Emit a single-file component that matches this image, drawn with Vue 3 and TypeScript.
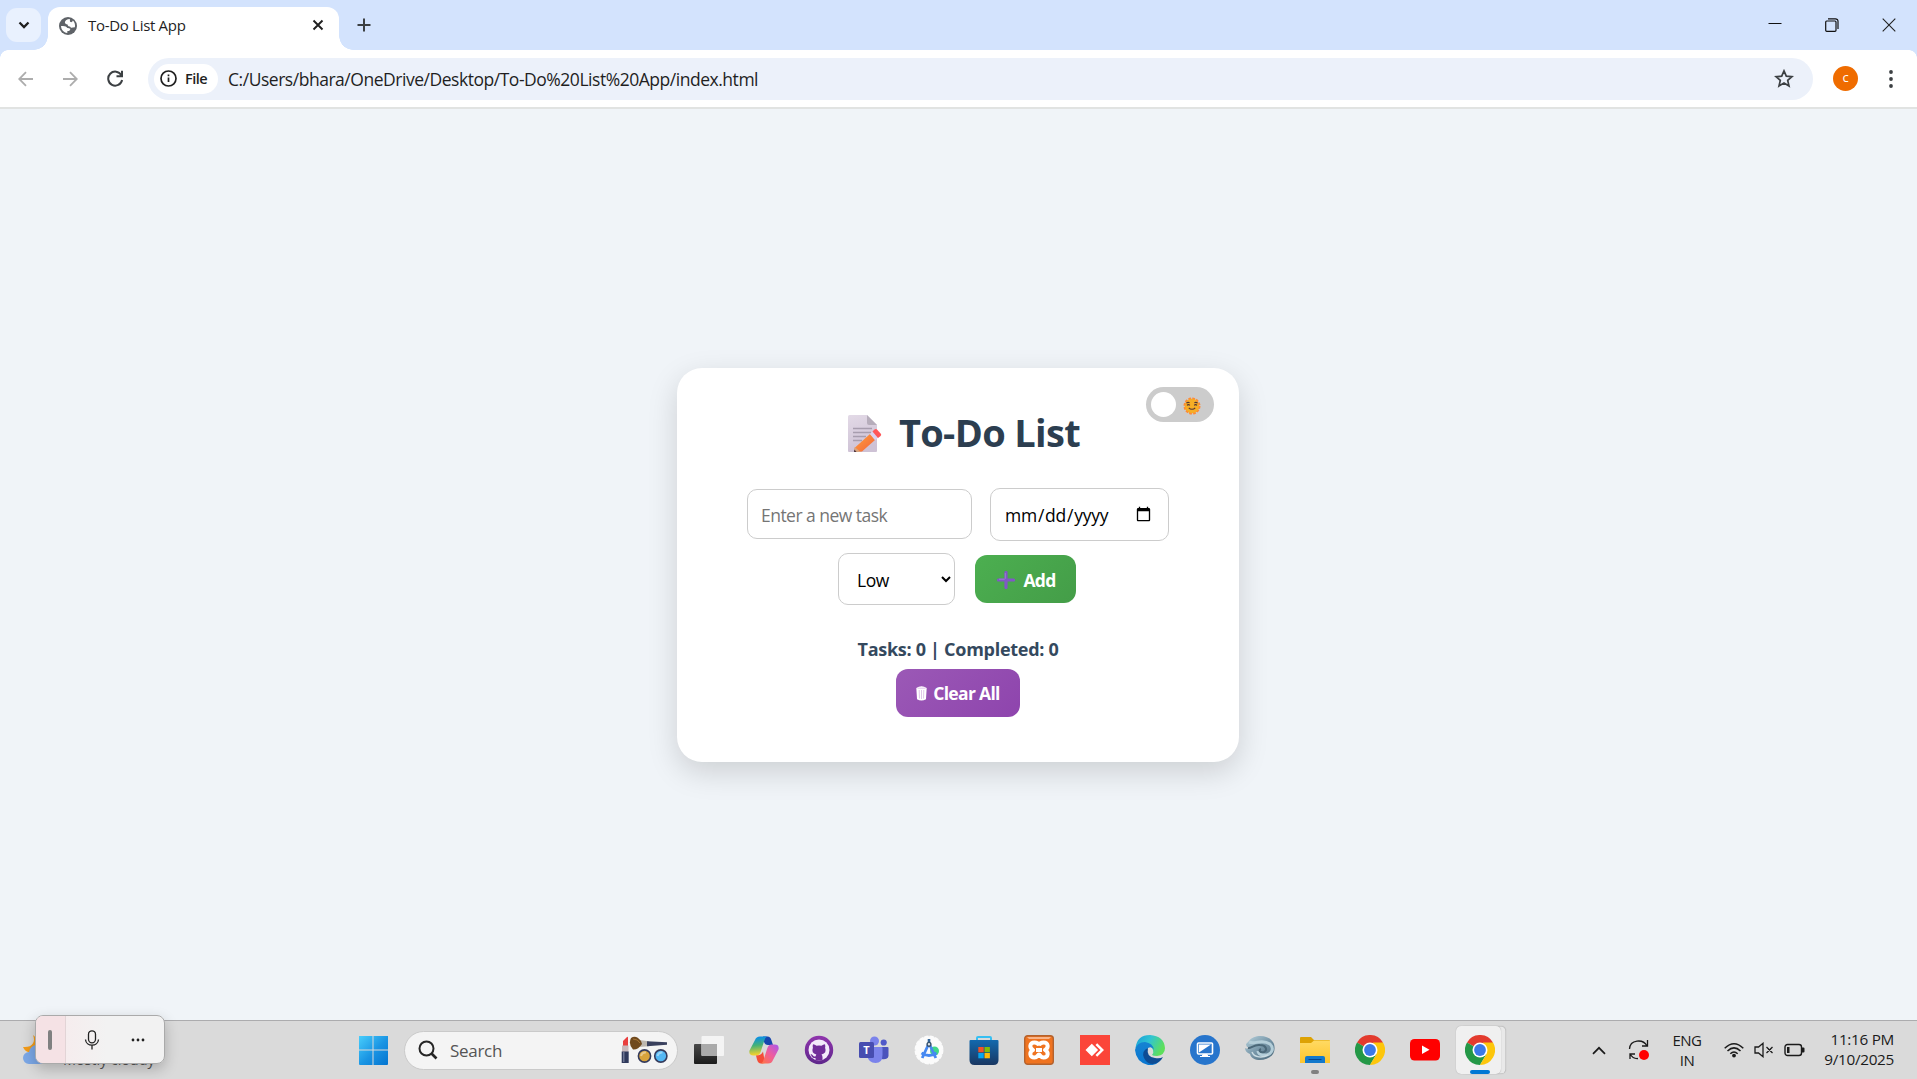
<script setup lang="ts">
import { ref } from 'vue'

const url = 'C:/Users/bhara/OneDrive/Desktop/To-Do%20List%20App/index.html'
const task = ref('')
const due = ref('')
const priority = ref('Low')
const total = ref(0)
const completed = ref(0)
</script>

<template>
  <div class="screen">
    <header class="tabs">
      <button class="tab-search">
        <svg width="12" height="8" viewBox="0 0 12 8"><path d="M1.500 1.500 6 6l4.500-4.500" fill="none" stroke="#1f1f1f" stroke-width="2.300" /></svg>
      </button>
      <div class="tab">
        <svg class="globe" width="18" height="18" viewBox="0 0 18 18">
          <circle cx="9" cy="9" r="9" fill="#5f6368" />
          <path d="M10.800 2c-2.800 0-4.700 1.500-4.900 3.200 0 1.500 1.200 2.100 2.700 2.200.2 1.400.9 2 2.400 2 .4 1 1.300 1.400 2.800 1.200l2.100-.4c.5-2.500-.2-5-2.100-6.600-.4 1.300-1.300 1.800-2.300 1.400-1-.4-.3-1.600-.7-3ZM2 9c.2 3.800 2.700 6.600 6.300 7l.1-1.900c1.900.1 2.900-.8 2.900-2.300-1-.7-2-.6-2.900-.8C7.500 9.200 5.500 8.600 2 9Z" fill="#fff" />
        </svg>
        <span class="tab-title">To-Do List App</span>
        <svg class="tab-close" width="12" height="12" viewBox="0 0 12 12"><path d="m1.500 1.500 9 9m0-9-9 9" stroke="#1f1f1f" stroke-width="1.900" /></svg>
      </div>
      <svg class="plus" width="14" height="14" viewBox="0 0 14 14"><path d="M7 .5v13M.5 7h13" stroke="#3c4043" stroke-width="2" /></svg>
      <div class="window">
        <svg width="14" height="14" viewBox="0 0 14 14"><path d="M.5 5.500h13" stroke="#111" /></svg>
        <svg width="14" height="14" viewBox="0 0 14 14" fill="none" stroke="#111"><rect x=".7" y="3" width="10.300" height="10.300" rx="1" stroke-width="1.200" /><path d="M3 .8h7.500a2.500 2.500 0 0 1 2.500 2.500v7.700" stroke-width="1.200" /></svg>
        <svg width="14" height="14" viewBox="0 0 14 14"><path d="m.7.7 12.600 12.600m0-12.600L.7 13.300" stroke="#222" stroke-width="1.100" /></svg>
      </div>
    </header>

    <nav class="toolbar">
      <svg class="back" width="16" height="16" viewBox="0 0 16 16"><path d="M15 8H1.500M8 1.200 1.200 8 8 14.800" fill="none" stroke="#adadad" stroke-width="1.800" /></svg>
      <svg class="forward" width="16" height="16" viewBox="0 0 16 16"><path d="M1 8h13.500M8 1.200 14.800 8 8 14.800" fill="none" stroke="#adadad" stroke-width="1.800" /></svg>
      <svg class="reload" width="17" height="17" viewBox="0 0 17 17"><path d="M14.300 5.100A7 7 0 1 0 15.100 10M15 .8v5.500H9.500" fill="none" stroke="#3c4043" stroke-width="2" /></svg>
      <div class="omnibox">
        <div class="chip">
          <svg width="17" height="17" viewBox="0 0 17 17"><circle cx="8.500" cy="8.500" r="7.500" fill="none" stroke="#1f1f1f" stroke-width="1.700" /><path d="M8.500 7.500v4.600M8.500 4.400v1.800" stroke="#1f1f1f" stroke-width="1.700" /></svg>
          <span>File</span>
        </div>
        <span class="url">{{ url }}</span>
        <svg class="star" width="20" height="19" viewBox="0 0 20 19"><path d="m10 1.900 2.300 5.300 5.700.5-4.300 3.700 1.300 5.600-5-3-5 3 1.300-5.600L2 7.700l5.700-.5Z" fill="none" stroke="#3c4043" stroke-width="1.700" /></svg>
      </div>
      <span class="avatar">c</span>
      <svg class="menu" width="4" height="18" viewBox="0 0 4 18" fill="#3c4043"><circle cx="2" cy="2" r="1.900" /><circle cx="2" cy="9" r="1.900" /><circle cx="2" cy="16" r="1.900" /></svg>
    </nav>

    <main class="page">
      <section class="card">
        <div class="toggle">
          <i class="knob"></i>
          <svg width="18" height="18" viewBox="0 0 18 18">
            <circle cx="9" cy="9" r="7.300" fill="#f8a51d" stroke="#ff8a35" stroke-width="2.400" stroke-dasharray="2.600 1.230" />
            <circle cx="9" cy="9" r="6.900" fill="#f6ae25" />
            <path d="M3.400 6.100q1.500-1.200 3.200-.3M11.400 5.800q1.700-.9 3.200.3M4 8.400c.8-1 2-1 2.800 0M11.200 8.400c.8-1 2-1 2.800 0M5.800 10.800c1.700 2 4.700 2 6.400 0" fill="none" stroke="#503437" stroke-width="1.100" />
          </svg>
        </div>

        <h1>
          <svg width="34" height="38" viewBox="0 0 34 38">
            <defs>
              <linearGradient id="paper" x2=".3" y2="1"><stop stop-color="#e3dae7" /><stop offset="1" stop-color="#cec2d5" /></linearGradient>
              <linearGradient id="pencil" x2="1" y2="1"><stop stop-color="#ffa13c" /><stop offset="1" stop-color="#f3633a" /></linearGradient>
            </defs>
            <path d="M0 1.500Q0 0 1.500 0H19l10 10v26q0 1-1 1H1q-1 0-1-1Z" fill="url(#paper)" />
            <path d="M19 0v8q0 2 2 2h8Z" fill="#b6adbb" />
            <path d="M5 13.500h19M5 17.500h18M5 21.500h13M5 25.500h9" stroke="#a79dae" stroke-width="1.500" />
            <path d="m22 19 5 6-13 11.500-7 .5-.5-4Z" fill="url(#pencil)" />
            <path d="m6.700 32 6 5H6Z" fill="#d9a47e" /><path d="m6.300 34.500 2.300 2.500H6Z" fill="#4a3440" />
            <path d="m22 19 3-2.500 5.500 6L27 25Z" fill="#dcd2ee" />
            <path d="m24.500 16.500 2-2q1.500-1 2.500 0l4 4.500q.6 1-.4 2L30 23Z" fill="#ff5658" />
          </svg>
          <span>To-Do List</span>
        </h1>

        <div class="row fields">
          <input v-model="task" class="task" type="text" placeholder="Enter a new task" />
          <input v-model="due" class="date" type="date" />
        </div>
        <div class="row controls">
          <select v-model="priority">
            <option>Low</option>
            <option>Medium</option>
            <option>High</option>
          </select>
          <button class="add">
            <svg width="18" height="18" viewBox="0 0 18 18"><path d="M9 1.500v15M1.500 9h15" stroke="#8058c5" stroke-width="3.200" stroke-linecap="round" /><path d="M8.300 2v5.800M2 8.200h5.800" stroke="#9b7bd6" stroke-width="1" /></svg>
            <span>Add</span>
          </button>
        </div>
        <p class="stats">Tasks: {{ total }} | Completed: {{ completed }}</p>
        <button class="clear">
          <svg width="11" height="15" viewBox="0 0 11 15"><path d="M.3 2Q5.500-1.500 10.700 2L10 13.200Q5.500 16 1 13.200Z" fill="#fff" /><path d="M1.500 2.200h8M3.200 4l.3 8.500M5.500 4v9M7.800 4l-.3 8.500" stroke="#d8b7e3" stroke-width=".8" /></svg>
          <span>Clear All</span>
        </button>
      </section>
    </main>

    <footer class="taskbar">
      <div class="weather">
        <svg width="34" height="30" viewBox="0 0 34 30"><path d="M10 0c3 7-1 13-10 12 2 5 7 7 12 4 5-3 5-11-2-16Z" fill="#f39b18" /><path d="M6 29a6 6 0 0 1 0-12 9 9 0 0 1 17-2 7 7 0 0 1 3 14Z" fill="#7ba7e6" /></svg>
        <span>Mostly cloudy</span>
      </div>

      <div class="cell start">
        <svg width="30" height="30" viewBox="0 0 30 30">
          <defs><linearGradient id="win" gradientUnits="userSpaceOnUse" x1="0" y1="0" x2="30" y2="30"><stop stop-color="#4bd1fd" /><stop offset=".55" stop-color="#1a94e3" /><stop offset="1" stop-color="#0374d0" /></linearGradient></defs>
          <path d="M1 1h13.500v13.500H1zM15.500 1H30v13.500H15.500zM1 15.500h13.500V30H2q-1 0-1-1zM15.500 15.500H30V29q0 1-1 1H15.500z" fill="url(#win)" />
        </svg>
      </div>

      <div class="search">
        <svg width="20" height="20" viewBox="0 0 20 20"><circle cx="8.500" cy="8.500" r="7" fill="none" stroke="#252525" stroke-width="2" /><path d="m13.500 13.500 5 5" stroke="#252525" stroke-width="2.600" /></svg>
        <span>Search</span>
        <svg class="makeup" width="47" height="28" viewBox="0 0 47 28">
          <path d="M2 10V5l4-4q1-1 1 1v8Z" fill="#e93e3e" /><path d="M1 9.500h6.500V16H1z" fill="#c8b9bc" /><path d="M.7 15.500h7V27h-7z" fill="#303a5c" /><path d="M2 16h1.500v10H2z" fill="#6c7592" />
          <path d="m18 4 10 1.200v5L18 11Z" fill="#bdb7ae" /><path d="m26 5.200 20 1v2.500l-20 1.500Z" fill="#39405d" />
          <path d="M10 2q5-3.500 10 3l1 3q-4 6-9 5.500Q7 8 10 2Z" fill="#70491d" /><path d="M12 3q5 0 7 4" stroke="#a67635" fill="none" />
          <circle cx="23.500" cy="20" r="6.100" fill="#d9a33b" stroke="#353b5c" stroke-width="1.600" /><circle cx="39.800" cy="20" r="6.100" fill="#53b7f3" stroke="#353b5c" stroke-width="1.600" />
          <path d="M20 20q1-4 5-3.500M36.500 20q1-4 5-3.500" stroke="#fff" stroke-opacity=".4" stroke-width="2" fill="none" />
        </svg>
      </div>

      <div class="apps">
        <div class="cell">
          <svg width="30" height="30" viewBox="0 0 30 30"><defs><linearGradient id="tv" x2="0" y2="1"><stop stop-color="#484848" /><stop offset="1" stop-color="#1b1b1b" /></linearGradient></defs><rect y="9" width="23" height="20" rx="1" fill="url(#tv)" /><rect x="7.500" y="1" width="22.500" height="20" rx="1" fill="#f4f4f4" /><path d="M7.500 9H23v12H8.500q-1 0-1-1Z" fill="#aaa" /></svg>
        </div>
        <div class="cell">
          <svg width="30" height="30" viewBox="0 0 30 30">
            <defs>
              <linearGradient id="cp1" x2=".1" y2="1"><stop offset=".1" stop-color="#0d91e1" /><stop offset=".5" stop-color="#45b276" /><stop offset="1" stop-color="#f6d12b" /></linearGradient>
              <linearGradient id="cp2" x1="1" x2=".1" y2="1"><stop stop-color="#a856ed" /><stop offset=".5" stop-color="#ed5ca0" /><stop offset="1" stop-color="#ff744a" /></linearGradient>
            </defs>
            <path d="M14 1.500h4.500q3 0 4 4l1.500 4.500h-5q-3 0-4-3Z" fill="#1646ae" />
            <path d="M6 5q1.200-3.500 5-3.500h7q-2 1-3 5l-3.200 10q-1.300 4-4.300 4H4.500Q-.5 20.500.5 15.500Z" fill="url(#cp1)" />
            <path d="M16 28q-1.500.5-4 .5-3 0-4-4l-1-4q5.500 0 7-4Z" fill="#f44d37" />
            <path d="M24 25q-1.200 3.500-5 3.500h-7q2-1 3-5l3.200-10q1.300-4 4.300-4h3q5 0 4 5Z" fill="url(#cp2)" />
          </svg>
        </div>
        <div class="cell">
          <svg width="30" height="30" viewBox="0 0 30 30"><defs><linearGradient id="gh" x2="0" y2="1"><stop stop-color="#9035ad" /><stop offset="1" stop-color="#5e278b" /></linearGradient></defs><circle cx="15" cy="15" r="14.200" fill="url(#gh)" /><circle cx="15" cy="15" r="10.500" fill="#f3eafa" /><path d="M9 9.300q2 .1 3.500 1.500 2.500-.6 5 0Q19 9.400 21 9.300q.6 2 .1 3.500 2 5.500-3.600 6.600 1 1 1 3v2.500q-3.500 1-7 0v-2c-2 .4-3.300-.4-4-2-.4-.8-1-1.300-1-1.600.9-.4 1.800.3 2.300 1 .7 1.200 1.700 1.500 2.800 1l.7-1.900Q6.900 18.300 8.900 12.800q-.5-1.700.1-3.500Z" fill="#712d99" /></svg>
        </div>
        <div class="cell">
          <svg width="30" height="30" viewBox="0 0 30 30"><circle cx="15.500" cy="6" r="4.500" fill="#7b83eb" /><circle cx="24.700" cy="7.500" r="3.100" fill="#5059c9" /><path d="M22 12h6.500q1 0 1 1v8q-1 4-7 3Z" fill="#4b53bc" /><path d="M9 12h13.500q1 0 1 1v7q0 8-7 8T8 20Z" fill="#7b83eb" /><rect y="7" width="15" height="16" rx="1.500" fill="#474db0" /><text x="7.500" y="18.700" text-anchor="middle" font-size="11" font-weight="700" fill="#fff">T</text></svg>
        </div>
        <div class="cell">
          <svg width="30" height="30" viewBox="0 0 30 30"><circle cx="15" cy="15" r="13.700" fill="#fbfbfb" stroke="#fbfbfb" stroke-width="1.500" stroke-dasharray="4.200 1.200" /><circle cx="20.500" cy="16" r="4.500" fill="#40d889" /><path d="m14.200 10-6 13M15.800 10l6 13M7.500 18q7.500 5 15 0" fill="none" stroke="#4688f1" stroke-width="2.800" /><path d="M15 4v5" stroke="#356799" stroke-width="2.600" /><circle cx="15" cy="9.300" r="1.900" fill="#dce4ea" stroke="#36516c" stroke-width="1.400" /></svg>
        </div>
        <div class="cell">
          <svg width="30" height="30" viewBox="0 0 30 30"><defs><linearGradient id="store" x2="0" y2="1"><stop stop-color="#1369ae" /><stop offset="1" stop-color="#193762" /></linearGradient></defs><path d="M8 6V3q0-1 1-1h12q1 0 1 1v3" fill="none" stroke="#36bff2" stroke-width="2" /><path d="M.5 6q0-1 1-1h27q1 0 1 1v19q0 5-5 5h-19q-5 0-5-5Z" fill="url(#store)" /><path d="M9.300 12h5.400v5.300H9.300z" fill="#f35325" /><path d="M15.500 12h5.400v5.300h-5.400z" fill="#81bc06" /><path d="M9.300 18h5.400v5.300H9.300z" fill="#05a6f0" /><path d="M15.500 18h5.400v5.300h-5.400z" fill="#ffba08" /></svg>
        </div>
        <div class="cell">
          <svg width="30" height="30" viewBox="0 0 30 30"><rect x=".7" y=".7" width="28.600" height="28.600" rx="3" fill="#ef7320" stroke="#b4622d" stroke-width="1.400" /><path d="M3 2h24l-2 2H5Z" fill="#f9b58a" /><path d="M12 15h6M15 10.500c-.8-2.500-2.500-3-4.500-3-5 0-5.500 5.500-1.500 7.500-4 2-3.500 7.500 1.500 7.500 3.500 0 3-3 4.500-3s1 3 4.500 3c5 0 5.500-5.500 1.500-7.500 4-2 3.500-7.500-1.500-7.500-2 0-3.700.5-4.500 3" fill="none" stroke="#fff" stroke-width="4" stroke-linejoin="round" /></svg>
        </div>
        <div class="cell">
          <svg width="30" height="30" viewBox="0 0 30 30"><path d="M0 0h30v30H0z" fill="#fb4539" /><path d="m5.500 15 6.300-6.300 6.300 6.300-6.300 6.300ZM15.500 10l1.700-1.800L24 15l-6.800 6.800-1.700-1.800 5-5Z" fill="#fff" /></svg>
        </div>
        <div class="cell">
          <svg width="30" height="30" viewBox="0 0 30 30">
            <defs><linearGradient id="edge1" x2="1" y2=".4"><stop stop-color="#179dda" /><stop offset=".5" stop-color="#31c4d2" /><stop offset="1" stop-color="#5ddf5c" /></linearGradient><linearGradient id="edge2" x2="0" y2="1"><stop stop-color="#1683d2" /><stop offset="1" stop-color="#0a76d0" /></linearGradient></defs>
            <path d="M.5 13Q2 0 15 0q14 1 15 13 0 7-8 8-4 0-5-1 2-2 1-5-2-5-8-6-6 0-9.500 4Z" fill="url(#edge1)" />
            <path d="M0 15q2-8 10-8 8 1 9 8-2-4-6-2-4 3-1 9 4 8 13 4-5 5-12 4Q1 27 0 15Z" fill="url(#edge2)" />
            <path d="M13 13q-7 3-4 10 3 6 9 6 7-1 10-7-3 2-8 1-9-1-7-10Z" fill="#0e4c94" />
          </svg>
        </div>
        <div class="cell">
          <svg width="30" height="30" viewBox="0 0 30 30"><circle cx="15" cy="15" r="15" fill="#2775cc" /><rect x="7.500" y="8" width="15" height="11" rx="1" fill="#2775cc" stroke="#fff" stroke-width="1.600" /><path d="M9 9.500h12L9 17.500Z" fill="#fff" /><path d="M13 19.500h4l1 2h-6ZM10 21.500h10" stroke="#fff" stroke-width="1" fill="#fff" /></svg>
        </div>
        <div class="cell">
          <svg width="30" height="30" viewBox="0 0 30 30"><defs><linearGradient id="swirl" x2="1" y2="1"><stop stop-color="#b7d2dd" /><stop offset=".5" stop-color="#7897a9" /><stop offset="1" stop-color="#486475" /></linearGradient></defs><path d="M4 6C9-1 25-1 29 9c3 11-6 16-14 16-5 0-9-2-10-6-3-1-5-3-5-6 2 1 3 1 4 0-2-1-3-2-3-4Z" fill="url(#swirl)" /><path d="M4 7c7 3 12-4 21 2 5 5 1 11-5 11-5 0-7-2-7-4" fill="none" stroke="#b4ced9" stroke-width="3" /><path d="M3 13c3 1 6-4 12-3 6 0 8 5 4 7-4 1-6-2-3-3" fill="none" stroke="#4b6879" stroke-width="2" /><path d="M7 17c2 6 11 6 16 3" fill="none" stroke="#cbdce3" stroke-width="1.500" /></svg>
        </div>
        <div class="cell">
          <svg width="30" height="30" viewBox="0 0 30 30"><defs><linearGradient id="folder" x2="0" y2="1"><stop stop-color="#ffda63" /><stop offset="1" stop-color="#ffc52c" /></linearGradient></defs><path d="M0 3q0-1 1-1h10l3 3h15q1 0 1 1v5H0Z" fill="#dda204" /><path d="M0 8h11l3-2.500h16V28H0Z" fill="url(#folder)" /><path d="M5 28v-5q0-2 2-2h16q2 0 2 2v5Z" fill="#1479cc" /><path d="M8.500 24.500h13" stroke="#07468e" /></svg>
          <i class="dot"></i>
        </div>
        <div class="cell">
          <svg width="30" height="30" viewBox="0 0 30 30"><path d="M2 7.500A15 15 0 0 1 28 7.500L15 15Z" fill="#e33b2e" /><path d="M2 7.500A15 15 0 0 0 15 30l6.500-11L15 15Z" fill="#249847" /><path d="M28 7.500A15 15 0 0 1 15 30l6.500-11L18 7.500Z" fill="#fdc60b" /><circle cx="15" cy="15" r="7.500" fill="#fff" /><circle cx="15" cy="15" r="5.900" fill="#3b79e8" /></svg>
        </div>
        <div class="cell">
          <svg width="30" height="30" viewBox="0 0 30 30"><rect y="4" width="30" height="21.500" rx="4.500" fill="#f00" /><path d="m12 10.500 7.500 4.300-7.500 4.300Z" fill="#fff" /></svg>
        </div>
        <div class="cell active">
          <svg width="30" height="30" viewBox="0 0 30 30"><path d="M2 7.500A15 15 0 0 1 28 7.500L15 15Z" fill="#e33b2e" /><path d="M2 7.500A15 15 0 0 0 15 30l6.500-11L15 15Z" fill="#249847" /><path d="M28 7.500A15 15 0 0 1 15 30l6.500-11L18 7.500Z" fill="#fdc60b" /><circle cx="15" cy="15" r="7.500" fill="#fff" /><circle cx="15" cy="15" r="5.900" fill="#3b79e8" /></svg>
          <i class="dot"></i>
        </div>
      </div>

      <div class="tray">
        <svg class="up" width="14" height="9" viewBox="0 0 14 9"><path d="m1 7.800 6-6 6 6" fill="none" stroke="#1b1b1b" stroke-width="1.700" /></svg>
        <svg class="sync" width="22" height="22" viewBox="0 0 22 22"><path d="M1.500 10C2 .5 15-.5 19 7M19.500 1v6H14M2 20v-5h5M2 15q3 5 8 4.500" fill="none" stroke="#1b1b1b" stroke-width="1.300" /><circle cx="16" cy="16" r="5" fill="#f00" /></svg>
        <div class="lang"><span>ENG</span><span>IN</span></div>
        <svg class="wifi" width="20" height="16" viewBox="0 0 20 16"><path d="M.7 6.200q9.300-9 18.600 0M3.500 9q6.500-6.300 13 0M6.300 11.700q3.700-3.500 7.400 0" fill="none" stroke="#1b1b1b" stroke-width="1.500" /><circle cx="10" cy="13.600" r="1.900" fill="#1b1b1b" /></svg>
        <svg class="sound" width="20" height="16" viewBox="0 0 20 16"><path d="M1 5h3.500L9 1.300v13.400L4.500 11H1ZM12.500 5l6 6m0-6-6 6" fill="none" stroke="#1b1b1b" stroke-width="1.300" /></svg>
        <svg class="battery" width="21" height="14" viewBox="0 0 21 14"><rect x="1" y="1.500" width="16.500" height="11" rx="2.500" fill="none" stroke="#1b1b1b" stroke-width="1.400" /><path d="M3 4h2.500v6H3zM18 4.500h1.500q1 0 1 1v3q0 1-1 1H18z" fill="#1b1b1b" /></svg>
        <div class="clock"><span>11:16 PM</span><span>9/10/2025</span></div>
      </div>
    </footer>

    <aside class="voice">
      <div class="grip"><i></i></div>
      <svg class="mic" width="16" height="20" viewBox="0 0 16 20"><rect x="4.500" y=".8" width="7" height="12" rx="3.500" fill="none" stroke="#222" stroke-width="1.300" /><path d="M1.500 9.500c.5 7.500 12.500 7.500 13 0M8 15.500v4" fill="none" stroke="#222" stroke-width="1.300" /></svg>
      <svg width="14" height="4" viewBox="0 0 14 4" fill="#222"><circle cx="2" cy="2" r="1.400" /><circle cx="7" cy="2" r="1.400" /><circle cx="12" cy="2" r="1.400" /></svg>
    </aside>
  </div>
</template>

<style>
body { overflow: hidden; }
</style>

<style scoped>
* { box-sizing: border-box; }
svg { display: block; flex: none; }
button { border: 0; padding: 0; font: inherit; }
.screen {
  position: relative;
  width: 1917px;
  height: 1079px;
  display: flex;
  flex-direction: column;
  overflow: hidden;
  font-family: "Open Sans", "Noto Sans", sans-serif;
  background: #f0f4f8;
}
.tabs {
  height: 50px;
  background: #d3e3fd;
  display: flex;
  align-items: flex-start;
  padding: 8px 21px 0 6px;
}
.tab-search {
  width: 35px;
  height: 34px;
  border-radius: 11px;
  background: #e9f1fe;
  display: grid;
  place-items: center;
}
.tab {
  position: relative;
  width: 291px;
  height: 43px;
  margin: -1px 0 0 7px;
  padding: 0 15px 6px 11px;
  border-radius: 12px 12px 0 0;
  background: #fff;
  display: flex;
  align-items: center;
}
.tab::before,
.tab::after {
  content: "";
  position: absolute;
  bottom: 0;
  width: 14px;
  height: 14px;
}
.tab::before { left: -14px; background: radial-gradient(circle at 0 0, transparent 13.500px, #fff 14px); }
.tab::after { right: -14px; background: radial-gradient(circle at 100% 0, transparent 13.500px, #fff 14px); }
.tab-title { margin: -1px 0 0 11px; font-size: 15px; letter-spacing: -.3px; color: #1f1f1f; }
.tab-close { margin: -1px 0 0 auto; }
.plus { margin: 10px 0 0 18px; }
.window { margin: 10px 0 0 auto; display: flex; gap: 43px; }
.toolbar {
  position: relative;
  height: 59px;
  background: #fff;
  border-bottom: 2px solid #e1e3e2;
  display: flex;
  align-items: center;
  padding: 0 24px 0 18px;
}
.toolbar::before,
.toolbar::after {
  content: "";
  position: absolute;
  top: 0;
  width: 8px;
  height: 8px;
}
.toolbar::before { left: 0; background: radial-gradient(circle at 100% 100%, transparent 7.500px, #d3e3fd 8px); }
.toolbar::after { right: 0; background: radial-gradient(circle at 0 100%, transparent 7.500px, #d3e3fd 8px); }
.forward { margin-left: 28px; }
.reload { margin-left: 29px; }
.omnibox {
  width: 1665px;
  height: 42px;
  margin-left: 24px;
  padding: 0 19px 0 6px;
  border-radius: 21px;
  background: #ecf1fa;
  display: flex;
  align-items: center;
}
.chip {
  width: 64px;
  height: 30px;
  padding-left: 6px;
  border-radius: 15px;
  background: #fff;
  display: flex;
  align-items: center;
  gap: 8px;
  font-size: 14.500px;
  font-weight: 600;
  letter-spacing: -.5px;
  color: #1f1f1f;
}
.url { margin: 1px 0 0 10px; font-size: 17.500px; letter-spacing: -.47px; color: #1f1f1f; white-space: nowrap; }
.star { margin-left: auto; }
.avatar {
  width: 25px;
  height: 25px;
  margin-left: 20px;
  border-radius: 50%;
  background: #ef6c00;
  color: #fff;
  font-size: 13px;
  line-height: 23px;
  text-align: center;
}
.menu { margin-left: auto; }

.page { flex: 1; display: flex; flex-direction: column; align-items: center; padding-top: 259px; }
.card {
  position: relative;
  width: 562px;
  height: 394px;
  margin-right: 1px;
  padding-top: 45px;
  border-radius: 25px;
  background: #fff;
  box-shadow: 0 10px 30px rgba(0, 0, 0, .15);
  display: flex;
  flex-direction: column;
  align-items: center;
}
.toggle {
  position: absolute;
  top: 19px;
  right: 25px;
  width: 68px;
  height: 35px;
  padding: 0 13px 0 5px;
  border-radius: 18px;
  background: #ccc;
  display: flex;
  align-items: center;
  justify-content: space-between;
}
.toggle svg { margin-top: 2px; }
.knob { width: 25px; height: 25px; border-radius: 50%; background: #fff; }
h1 {
  height: 40px;
  margin: 0;
  padding-left: 12px;
  display: flex;
  align-items: center;
  gap: 17px;
  font-size: 38px;
  line-height: 38px;
  font-weight: 700;
  letter-spacing: -.65px;
  color: #2c3e50;
}
h1 svg { margin-top: 1px; }
h1 span { margin-top: -2px; }
.row { display: flex; align-items: center; justify-content: center; gap: 20px; }
.fields { margin-top: 35px; gap: 18px; }
.controls { margin: 12px 2px 0 0; }
input,
select {
  margin: 0;
  border: 1px solid #ccc;
  border-radius: 10px;
  background: #fff;
  color: #000;
  font: 17.500px "Open Sans", "Noto Sans", sans-serif;
}
.task { width: 225px; height: 50px; margin-bottom: 1px; padding: 2px 13px 0; letter-spacing: -.53px; }
.date { width: 179px; height: 53px; padding: 1px 14px 0 13px; letter-spacing: -.25px; }
select { width: 117px; height: 52px; padding: 2px 5px 0 14px; letter-spacing: -.5px; }
.add,
.clear {
  height: 48px;
  border-radius: 12px;
  color: #fff;
  font-size: 17.500px;
  font-weight: 700;
  letter-spacing: -.68px;
  display: flex;
  align-items: center;
  justify-content: center;
}
.add { width: 101px; gap: 8px; padding: 2px 0 0 2px; background: linear-gradient(135deg, #4caf50, #449d48); }
.clear { width: 124px; gap: 6px; background: linear-gradient(135deg, #9b59b6, #8e44ad); }
.stats {
  margin: 31px 0 7px;
  height: 26px;
  line-height: 26px;
  font-size: 18px;
  font-weight: 700;
  letter-spacing: -.28px;
  color: #34495e;
}

.taskbar {
  height: 59px;
  border-top: 1px solid #acacae;
  background: #dadada;
  display: flex;
  align-items: center;
}
.weather { width: 345px; height: 58px; padding-left: 23px; display: flex; align-items: center; }
.weather span { margin: 18px 0 0 6px; font-size: 14.500px; letter-spacing: -.1px; color: #555; }
.cell { position: relative; width: 55.070px; height: 48px; display: grid; place-items: center; }
.search {
  width: 273.500px;
  height: 39px;
  margin: 0 4px;
  padding: 0 9px 0 13px;
  border-radius: 20px;
  border: 1px solid #cacaca;
  background: #f4f4f4;
  display: flex;
  align-items: center;
  color: #555;
  font-size: 17px;
  letter-spacing: -.3px;
}
.search span { margin-left: 12px; }
.makeup { margin-left: auto; }
.apps { display: flex; }
.dot {
  position: absolute;
  bottom: 0;
  left: 50%;
  width: 8px;
  height: 4px;
  margin-left: -4px;
  border-radius: 2px;
  background: #808080;
}
.active::before {
  content: "";
  position: absolute;
  inset: 0 7px 0 4px;
  border-radius: 5px;
  background: #f0f0f0;
  box-shadow: 0 0 1px #999, 5px 0 0 -.5px #e9e9e9, 5px 0 1px #aaa;
}
.active svg { position: relative; }
.active .dot { width: 20px; margin-left: -10px; background: #0078d4; }
.tray { margin-left: auto; display: flex; align-items: center; padding-right: 23px; color: #1b1b1b; font-size: 15px; line-height: 20px; }
.tray span { display: block; letter-spacing: -.5px; }
.sync { margin-left: 22px; }
.lang { width: 32px; margin-left: 21px; text-align: center; }
.wifi { margin-left: 21px; }
.sound { margin-left: 10px; }
.battery { margin-left: 10px; }
.clock { width: 72px; margin: -2px 0 0 17px; text-align: right; white-space: nowrap; }
.tray .clock span { font-size: 15.300px; letter-spacing: -.3px; }

.voice {
  position: absolute;
  left: 35px;
  top: 1015px;
  width: 130px;
  height: 49px;
  border: 1px solid #aaa;
  border-radius: 8px;
  background: linear-gradient(90deg, #f8e9eb, #f2f2f2 55%);
  box-shadow: 0 5px 14px rgba(0, 0, 0, .22);
  display: flex;
  align-items: center;
  overflow: hidden;
}
.grip { width: 30px; height: 100%; border-right: 1px solid #e2d4d6; background: #f5e2e5; display: grid; place-items: center; }
.grip i { width: 4px; height: 20px; margin-right: 1px; border-radius: 2px; background: #808080; }
.mic { margin: 0 31px 0 18px; }
</style>
